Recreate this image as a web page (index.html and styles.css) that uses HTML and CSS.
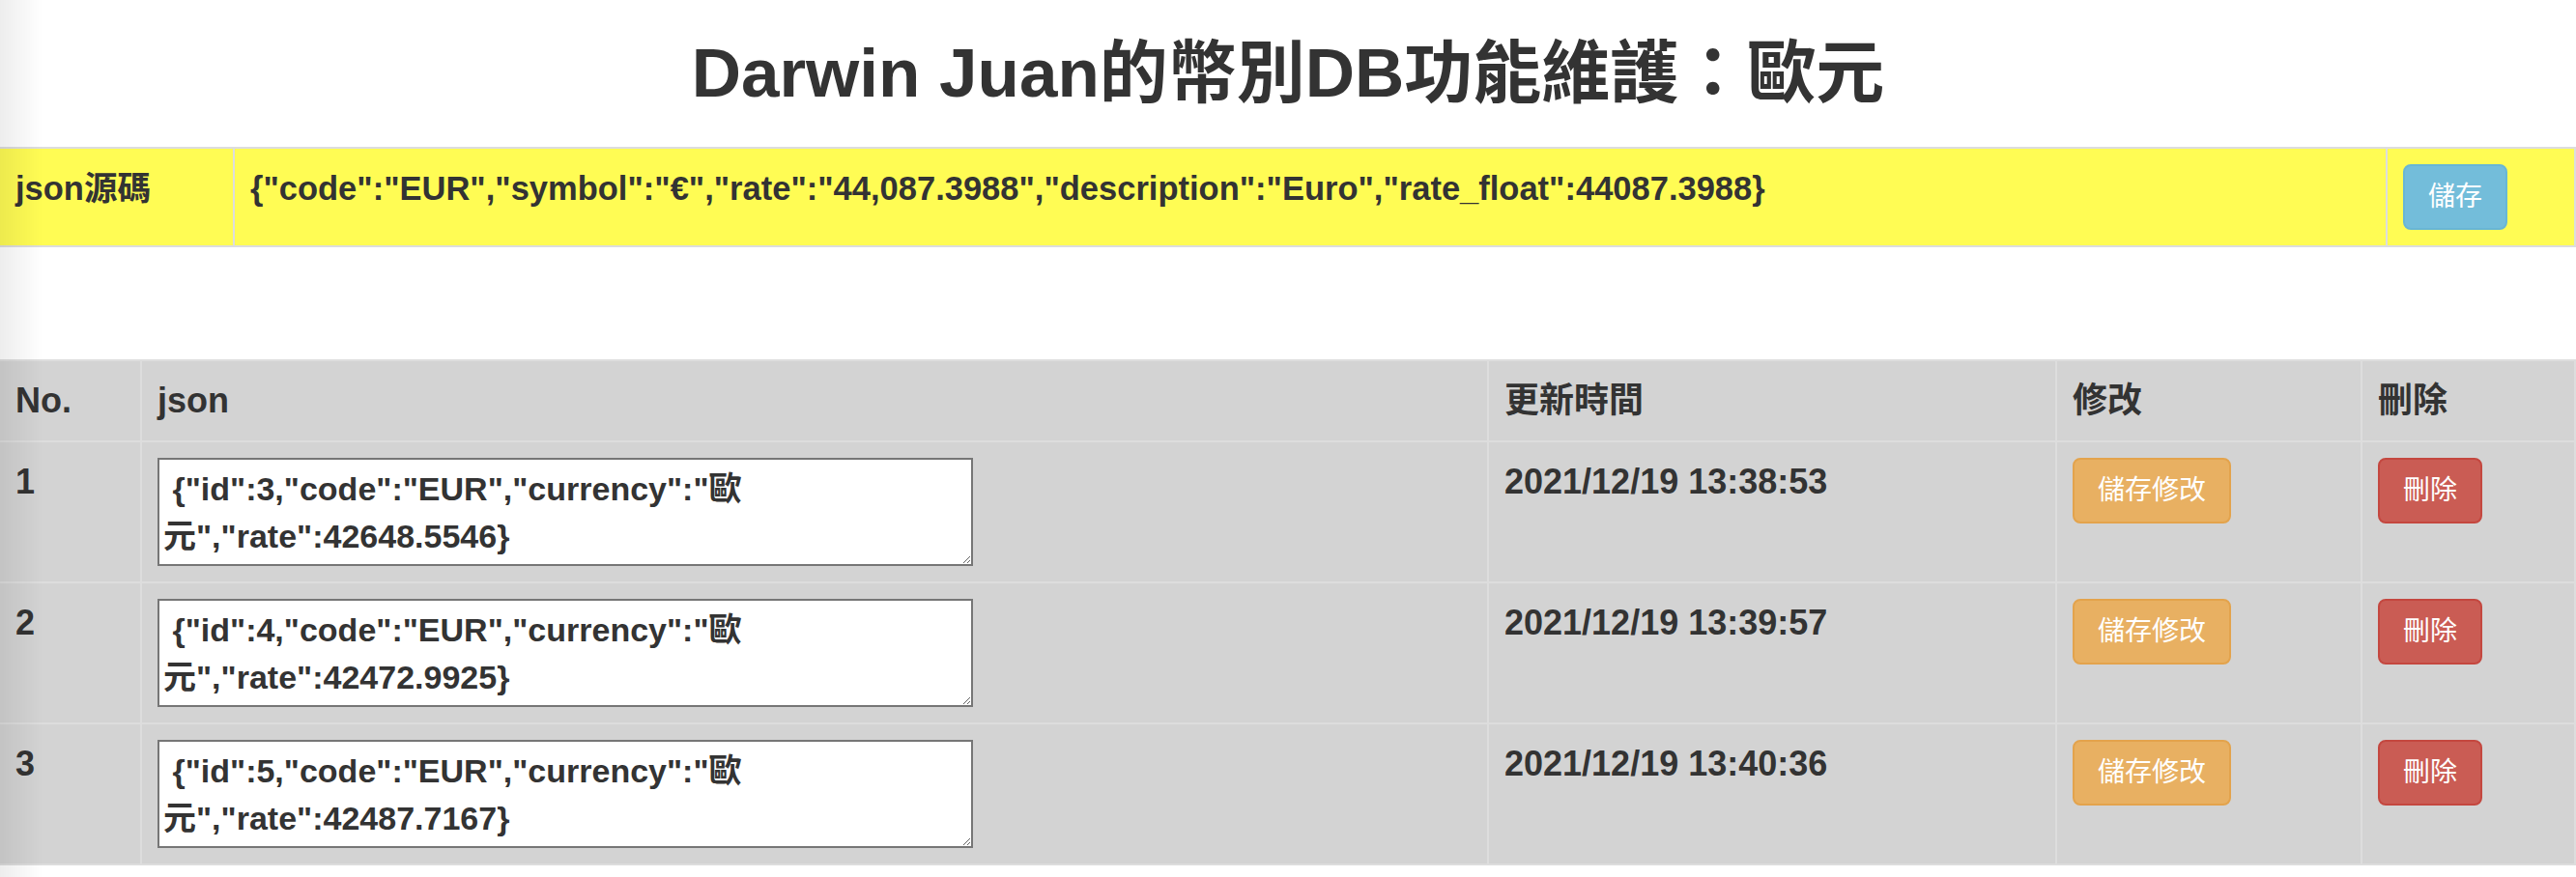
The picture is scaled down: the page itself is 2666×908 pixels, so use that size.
FILE: index.html
```html
<!DOCTYPE html>
<html lang="zh-Hant">
<head>
<meta charset="utf-8">
<title>Darwin Juan的幣別DB功能維護：歐元</title>
<link rel="stylesheet" href="styles.css">
</head>
<body>
<h1 class="page-title">Darwin Juan的幣別DB功能維護：歐元</h1>

<table class="grid source-table">
  <colgroup>
    <col class="c-label">
    <col class="c-source">
    <col class="c-save">
  </colgroup>
  <tbody>
    <tr>
      <td class="cell">json源碼</td>
      <td class="cell">{"code":"EUR","symbol":"€","rate":"44,087.3988","description":"Euro","rate_float":44087.3988}</td>
      <td class="cell"><button class="btn btn-info" type="button">儲存</button></td>
    </tr>
  </tbody>
</table>

<table class="grid list-table">
  <colgroup>
    <col class="c-no">
    <col class="c-json">
    <col class="c-time">
    <col class="c-edit">
    <col class="c-del">
  </colgroup>
  <thead>
    <tr>
      <th class="cell">No.</th>
      <th class="cell">json</th>
      <th class="cell">更新時間</th>
      <th class="cell">修改</th>
      <th class="cell">刪除</th>
    </tr>
  </thead>
  <tbody>
    <tr>
      <td class="cell">1</td>
      <td class="cell"><textarea class="json-edit"> {"id":3,"code":"EUR","currency":"歐元","rate":42648.5546}</textarea></td>
      <td class="cell">2021/12/19 13:38:53</td>
      <td class="cell"><button class="btn btn-warning" type="button">儲存修改</button></td>
      <td class="cell"><button class="btn btn-danger" type="button">刪除</button></td>
    </tr>
    <tr>
      <td class="cell">2</td>
      <td class="cell"><textarea class="json-edit"> {"id":4,"code":"EUR","currency":"歐元","rate":42472.9925}</textarea></td>
      <td class="cell">2021/12/19 13:39:57</td>
      <td class="cell"><button class="btn btn-warning" type="button">儲存修改</button></td>
      <td class="cell"><button class="btn btn-danger" type="button">刪除</button></td>
    </tr>
    <tr>
      <td class="cell">3</td>
      <td class="cell"><textarea class="json-edit"> {"id":5,"code":"EUR","currency":"歐元","rate":42487.7167}</textarea></td>
      <td class="cell">2021/12/19 13:40:36</td>
      <td class="cell"><button class="btn btn-warning" type="button">儲存修改</button></td>
      <td class="cell"><button class="btn btn-danger" type="button">刪除</button></td>
    </tr>
  </tbody>
</table>
</body>
</html>
```

FILE: styles.css
```css
html, body {
  margin: 0;
  padding: 0;
  background: #ffffff;
}

body {
  font-family: "Liberation Sans", "Noto Sans CJK TC", sans-serif;
  color: #333333;
  font-weight: bold;
}

body::before {
  content: "";
  position: fixed;
  left: 0;
  top: 0;
  bottom: 0;
  width: 44px;
  background: linear-gradient(to right, rgba(0, 0, 0, 0.07), rgba(0, 0, 0, 0));
  pointer-events: none;
  z-index: 10;
}

.page-title {
  margin: 36px 0 36px;
  font-size: 71px;
  line-height: 80px;
  font-weight: bold;
  text-align: center;
  color: #333333;
}

.grid {
  width: 100%;
  table-layout: fixed;
  border-collapse: separate;
  border-spacing: 0;
  border-top: 2px solid #dddddd;
}

.cell {
  box-sizing: border-box;
  padding: 16px;
  border-right: 2px solid #dddddd;
  border-bottom: 2px solid #dddddd;
  vertical-align: top;
  text-align: left;
  font-size: 36px;
  line-height: 50px;
  font-weight: bold;
  color: #333333;
}

.source-table {
  background: #fffc54;
  margin: 0 0 116px;
}

.source-table .cell {
  font-size: 34.5px;
}

.source-table .c-label { width: 243px; }
.source-table .c-source { width: 2228px; }
.source-table .c-save { width: auto; }

.list-table {
  background: #d3d3d3;
  margin: 0;
}

.list-table .c-no { width: 147px; }
.list-table .c-json { width: 1394px; }
.list-table .c-time { width: 588px; }
.list-table .c-edit { width: 316px; }
.list-table .c-del { width: auto; }

.json-edit {
  display: block;
  box-sizing: border-box;
  width: 844px;
  height: 112px;
  margin: 0;
  padding: 6px 4px 4px;
  border: 2px solid #767676;
  background: #ffffff;
  color: #333333;
  font-family: "Liberation Sans", "Noto Sans CJK TC", sans-serif;
  font-size: 34px;
  line-height: 49px;
  font-weight: bold;
}

.btn {
  display: inline-block;
  box-sizing: border-box;
  height: 68px;
  margin: 0;
  padding: 12px 24px;
  border: 2px solid transparent;
  border-radius: 8px;
  font-family: "Liberation Sans", "Noto Sans CJK TC", sans-serif;
  font-size: 28px;
  line-height: 40px;
  font-weight: normal;
  color: #ffffff;
  white-space: nowrap;
  cursor: pointer;
}

.btn-info {
  background: #73bdda;
  border-color: #68b6d5;
}

.btn-warning {
  background: #e8b062;
  border-color: #e3a34c;
}

.btn-danger {
  background: #ca5c54;
  border-color: #c4473f;
}
```
